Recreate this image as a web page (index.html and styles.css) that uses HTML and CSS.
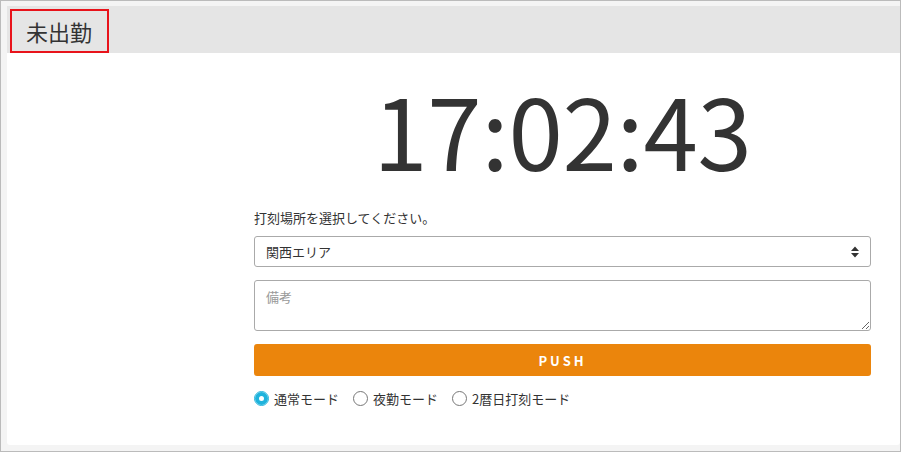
FILE: index.html
```html
<!DOCTYPE html>
<html lang="ja">
<head>
    <meta charset="UTF-8">
    <meta name="viewport" content="width=device-width, initial-scale=1.0">
    <title>打刻</title>
    <link rel="stylesheet" href="styles.css">
</head>
<body>
    <div class="panel">
        <div class="panel-heading">
            <span class="status">未出勤</span>
        </div>
        <div class="panel-body">
            <div class="punch-form">
                <div class="clock">17:02:43</div>
                <label class="place-label" for="place">打刻場所を選択してください。</label>
                <div class="select-wrap">
                    <select id="place" class="form-control">
                        <option>関西エリア</option>
                    </select>
                    <svg class="select-arrow" width="8" height="12" viewBox="0 0 8 12">
                        <path d="M0 5 L4 0.5 L8 5 Z M0 7 L4 11.5 L8 7 Z" fill="#333"/>
                    </svg>
                </div>
                <textarea class="form-control note" placeholder="備考"></textarea>
                <button class="push-btn">PUSH</button>
                <div class="modes">
                    <label class="mode"><input type="radio" name="mode" checked> 通常モード</label>
                    <label class="mode"><input type="radio" name="mode"> 夜勤モード</label>
                    <label class="mode"><input type="radio" name="mode"> 2暦日打刻モード</label>
                </div>
            </div>
        </div>
    </div>
</body>
</html>
```

FILE: styles.css
```css
html, body {
    height: 100%;
}

body {
    font-family: "Noto Sans CJK JP", "Noto Sans", sans-serif;
    color: #333;
    margin: 0;
    padding: 5px 0 6px 6px;
    box-sizing: border-box;
    background-color: #f4f4f4;
    border: 1px solid #bbb;
}

.panel {
    background-color: #fff;
    border-radius: 3px;
    height: 100%;
}

.panel-heading {
    background-color: #e5e5e5;
    height: 47px;
    padding-left: 3px;
    padding-top: 3px;
    box-sizing: border-box;
}

.status {
    display: inline-block;
    border: 2px solid #e8131b;
    height: 44px;
    box-sizing: border-box;
    padding: 0 15px 0 14px;
    font-size: 22px;
    line-height: 40px;
}

.panel-body {
    padding-left: 247px;
    padding-right: 29px;
}

.punch-form {
    display: flex;
    flex-direction: column;
}

.clock {
    font-size: 98px;
    line-height: 1;
    text-align: center;
    margin-top: 26px;
    height: 120px;
    letter-spacing: -0.3px;
}

.place-label {
    font-size: 13px;
    line-height: 20px;
    margin-top: 9px;
    margin-bottom: 8px;
}

.select-wrap {
    position: relative;
}

.form-control {
    width: 100%;
    box-sizing: border-box;
    font-family: inherit;
    font-size: 13px;
    color: #333;
    border: 1px solid #aaa;
    border-radius: 3px;
    background-color: #fff;
}

select.form-control {
    appearance: none;
    -webkit-appearance: none;
    height: 31px;
    padding: 0 11px;
}

.select-arrow {
    position: absolute;
    right: 12px;
    top: 10px;
}

.note {
    height: 51px;
    margin-top: 13px;
    padding: 6px 11px;
    resize: vertical;
}

.note::placeholder {
    color: #999;
}

.push-btn {
    margin-top: 13px;
    height: 32px;
    border: none;
    border-radius: 3px;
    background-color: #eb850c;
    color: #fff;
    font-family: inherit;
    font-size: 13px;
    font-weight: bold;
    letter-spacing: 3px;
}

.modes {
    display: flex;
    gap: 14px;
    margin-top: 13px;
    font-size: 13px;
}

.mode {
    display: flex;
    align-items: center;
    gap: 5px;
}

.mode input {
    appearance: none;
    -webkit-appearance: none;
    width: 15px;
    height: 15px;
    margin: 0;
    border: 1px solid #777;
    border-radius: 50%;
    background: #fff;
}

.mode input:checked {
    border-color: #1fb3dc;
    box-shadow: inset 0 0 0 4px #1fb3dc;
}
```
